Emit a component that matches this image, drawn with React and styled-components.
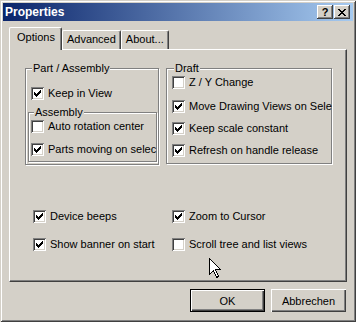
import React from 'react'
import styled, { createGlobalStyle } from 'styled-components'

const GlobalStyle = createGlobalStyle`
  html, body {
    margin: 0;
    padding: 0;
    background: #d4d0c8;
  }
  body {
    font-family: "Liberation Sans", Arial, sans-serif;
    font-size: 11px;
    color: #000;
  }
`

const Window = styled.div`
  box-sizing: border-box;
  width: 356px;
  height: 322px;
  padding: 3px;
  background: #d4d0c8;
  box-shadow: inset 1px 1px #d4d0c8, inset -1px -1px #404040,
    inset 2px 2px #fff, inset -2px -2px #808080;
  display: flex;
  flex-direction: column;
`

const TitleBar = styled.div`
  height: 18px;
  display: flex;
  align-items: center;
  padding: 0 3px 0 2px;
  background: linear-gradient(to right, #0a246a, #a6caf0);
`

const Title = styled.span`
  flex: 1;
  color: #fff;
  font-weight: bold;
  font-size: 12px;
`

const CaptionButton = styled.div`
  box-sizing: border-box;
  width: 16px;
  height: 14px;
  margin-left: ${({ $gap }) => $gap || 0}px;
  background: #d4d0c8;
  box-shadow: inset -1px -1px #404040, inset 1px 1px #fff, inset -2px -2px #808080;
  display: flex;
  align-items: center;
  justify-content: center;
  font: bold 11px "Liberation Sans", Arial, sans-serif;
  line-height: 12px;
`

const Body = styled.div`
  flex: 1;
  display: flex;
  flex-direction: column;
  padding: 6px 6px 0 6px;
`

const TabStrip = styled.div`
  height: 22px;
  display: flex;
  align-items: flex-start;
`

const Tab = styled.div`
  box-sizing: border-box;
  position: relative;
  z-index: ${({ $active }) => ($active ? 1 : 0)};
  height: ${({ $active }) => ($active ? 23 : 19)}px;
  margin-top: ${({ $active }) => ($active ? 0 : 3)}px;
  padding: ${({ $active }) => ($active ? '3px 6px 0 7px' : '2px 4px 0 4px')};
  background: #d4d0c8;
  border-top: 1px solid #fff;
  border-left: 1px solid #fff;
  border-right: 1px solid #404040;
  border-radius: 2px 2px 0 0;
  box-shadow: inset -1px 0 #808080;
  line-height: 13px;
  white-space: nowrap;
`

const Panel = styled.div`
  box-sizing: border-box;
  position: relative;
  width: 338px;
  height: 233px;
  border-top: 1px solid #fff;
  border-left: 1px solid #fff;
  border-right: 1px solid #404040;
  border-bottom: 1px solid #404040;
  box-shadow: inset -1px -1px #808080;
  padding: 18px 0 0 15px;
`

const GroupRow = styled.div`
  display: flex;
  align-items: flex-start;
  gap: 7px;
`

const Group = styled.div`
  position: relative;
  box-sizing: border-box;
  width: ${({ $w }) => $w}px;
  height: ${({ $h }) => $h}px;
  margin: ${({ $margin }) => $margin || 0};
  border: 1px solid #808080;
  box-shadow: inset 1px 1px #fff, 1px 1px #fff;
`

const Legend = styled.span`
  position: absolute;
  top: -7px;
  left: ${({ $x }) => $x}px;
  padding: 0 1px;
  background: #d4d0c8;
  line-height: 13px;
`

const CheckRow = styled.div`
  display: flex;
  align-items: center;
  height: 13px;
  margin-top: ${({ $top }) => $top || 0}px;
  padding-left: ${({ $left }) => $left || 0}px;
  gap: 4px;
  line-height: 13px;
  white-space: nowrap;
  min-width: 0;
`

const Box = styled.span`
  flex: none;
  box-sizing: border-box;
  width: 13px;
  height: 13px;
  background: #fff;
  box-shadow: inset 1px 1px #808080, inset -1px -1px #fff,
    inset 2px 2px #404040, inset -2px -2px #d4d0c8;
  display: flex;
  align-items: center;
  justify-content: center;
`

const LabelText = styled.span`
  flex: 1;
  min-width: 0;
`

const OptionGrid = styled.div`
  display: grid;
  grid-template-columns: 139px 1fr;
  row-gap: 15px;
  margin: 45px 0 0 8px;
`

const Cursor = styled.svg`
  position: absolute;
  left: 199px;
  top: 208px;
`

const ButtonRow = styled.div`
  display: flex;
  justify-content: flex-end;
  gap: 6px;
  margin-top: 7px;
  padding-right: 1px;
`

const PushButton = styled.div`
  box-sizing: border-box;
  width: 75px;
  height: 23px;
  display: flex;
  align-items: center;
  justify-content: center;
  background: #d4d0c8;
  border: ${({ $default }) => ($default ? '1px solid #000' : 'none')};
  box-shadow: inset 1px 1px #fff, inset -1px -1px #404040, inset -2px -2px #808080;
  padding-top: 1px;
`

const CheckMark = () => (
  <svg width="7" height="7" viewBox="0 0 7 7" shapeRendering="crispEdges">
    <g fill="#000">
      <rect x="6" y="0" width="1" height="1" />
      <rect x="5" y="1" width="2" height="1" />
      <rect x="0" y="2" width="1" height="1" />
      <rect x="4" y="2" width="3" height="1" />
      <rect x="0" y="3" width="2" height="1" />
      <rect x="3" y="3" width="3" height="1" />
      <rect x="0" y="4" width="5" height="1" />
      <rect x="1" y="5" width="3" height="1" />
      <rect x="2" y="6" width="1" height="1" />
    </g>
  </svg>
)

const CloseGlyph = () => (
  <svg width="8" height="7" viewBox="0 0 8 7" shapeRendering="crispEdges">
    <g fill="#000">
      <rect x="0" y="0" width="2" height="1" />
      <rect x="6" y="0" width="2" height="1" />
      <rect x="1" y="1" width="2" height="1" />
      <rect x="5" y="1" width="2" height="1" />
      <rect x="2" y="2" width="4" height="1" />
      <rect x="3" y="3" width="2" height="1" />
      <rect x="2" y="4" width="4" height="1" />
      <rect x="1" y="5" width="2" height="1" />
      <rect x="5" y="5" width="2" height="1" />
      <rect x="0" y="6" width="2" height="1" />
      <rect x="6" y="6" width="2" height="1" />
    </g>
  </svg>
)

function Check({ checked, label, top, left }) {
  return (
    <CheckRow $top={top} $left={left}>
      <Box>{checked && <CheckMark />}</Box>
      <LabelText>{label}</LabelText>
    </CheckRow>
  )
}

const tabs = ['Options', 'Advanced', 'About...']

export default function App() {
  return (
    <>
      <GlobalStyle />
      <Window>
        <TitleBar>
          <Title>Properties</Title>
          <CaptionButton>?</CaptionButton>
          <CaptionButton $gap={1}>
            <CloseGlyph />
          </CaptionButton>
        </TitleBar>
        <Body>
          <TabStrip>
            {tabs.map((t, i) => (
              <Tab key={t} $active={i === 0}>
                {t}
              </Tab>
            ))}
          </TabStrip>
          <Panel>
            <GroupRow>
              <Group $w={134} $h={97}>
                <Legend $x={6}>Part / Assembly</Legend>
                <Check checked label="Keep in View" top={18} left={5} />
                <Group $w={129} $h={50} $margin="12px 0 0 2px">
                  <Legend $x={5}>Assembly</Legend>
                  <Check label="Auto rotation center" top={7} left={2} />
                  <Check checked label="Parts moving on selec" top={10} left={2} />
                </Group>
              </Group>
              <Group $w={166} $h={96}>
                <Legend $x={7}>Draft</Legend>
                <Check label="Z / Y Change" top={7} left={5} />
                <Check checked label="Move Drawing Views on Sele" top={11} left={5} />
                <Check checked label="Keep scale constant" top={9} left={5} />
                <Check checked label="Refresh on handle release" top={9} left={5} />
              </Group>
            </GroupRow>
            <OptionGrid>
              <Check checked label="Device beeps" />
              <Check checked label="Zoom to Cursor" />
              <Check checked label="Show banner on start" />
              <Check label="Scroll tree and list views" />
            </OptionGrid>
            <Cursor width="12" height="20" viewBox="0 0 12 20" shapeRendering="crispEdges">
              <path
                d="M0.5 0.5 L0.5 16.5 L4.5 12.5 L7.5 19.5 L9.5 18.5 L6.5 11.5 L11.5 11.5 Z"
                fill="#fff"
                stroke="#000"
                strokeWidth="1"
              />
            </Cursor>
          </Panel>
          <ButtonRow>
            <PushButton $default>OK</PushButton>
            <PushButton>Abbrechen</PushButton>
          </ButtonRow>
        </Body>
      </Window>
    </>
  )
}
